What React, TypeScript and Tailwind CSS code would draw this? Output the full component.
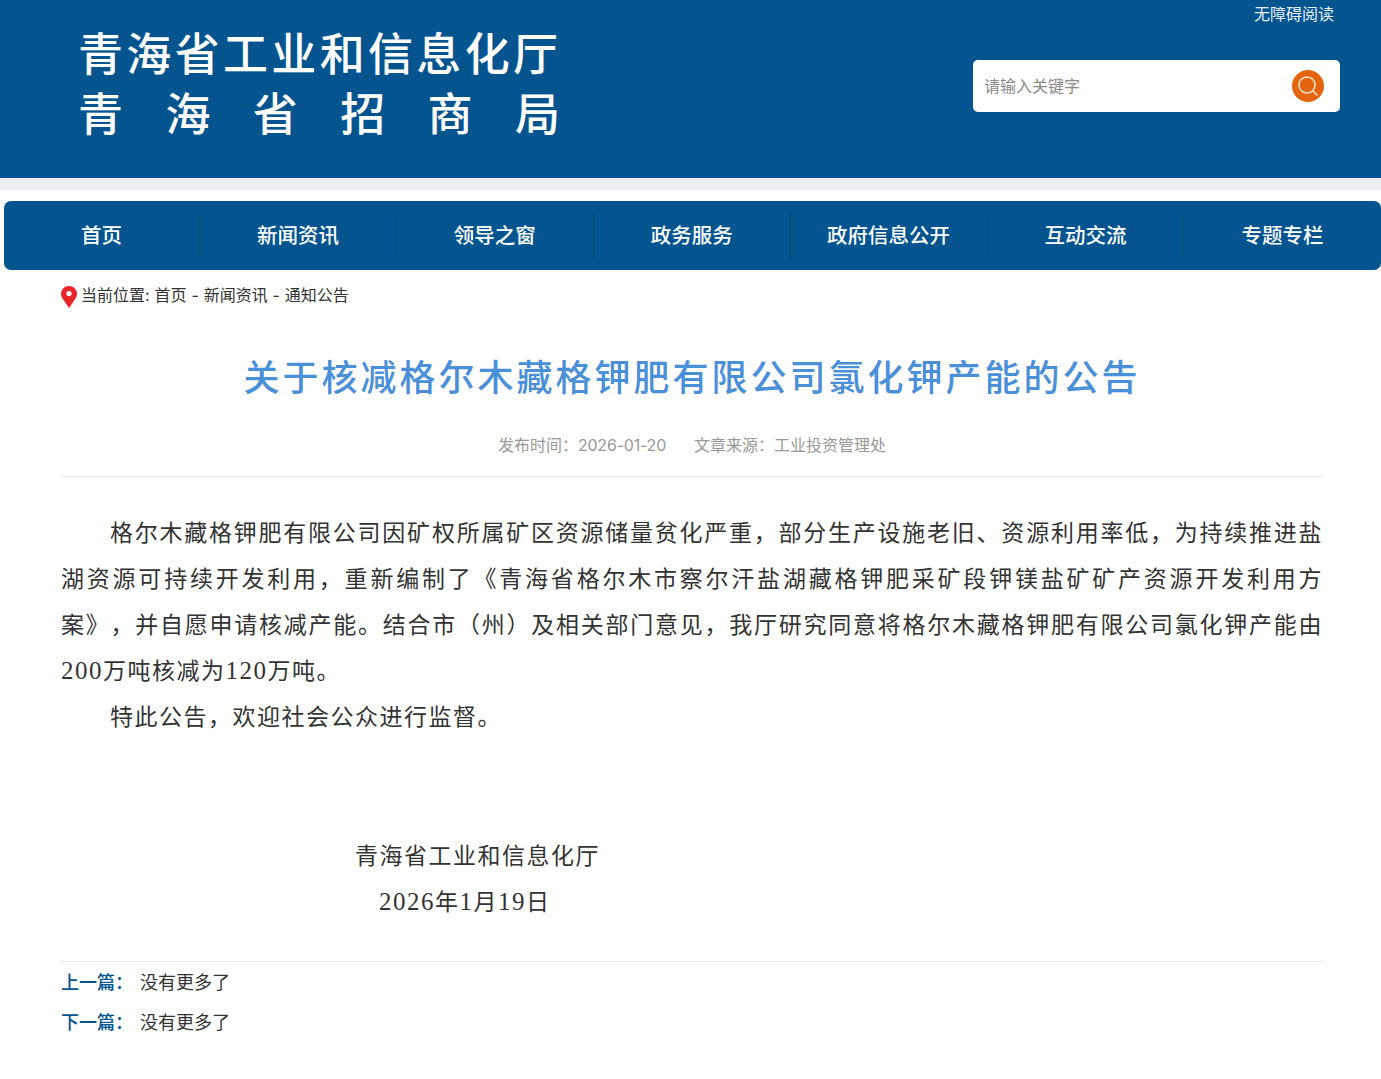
const cjk = "font-['Inter','Noto_Sans_CJK_SC',sans-serif]"

const navItems = ['首页', '新闻资讯', '领导之窗', '政务服务', '政府信息公开', '互动交流', '专题专栏']

function PinIcon() {
  return (
    <svg width="16" height="22" viewBox="0 0 16 22" className="shrink-0 mt-0.5">
      <path d="M8 0C3.600 0 0 3.500 0 7.800c0 2.200.8 3.700 2 5.500L8 22l6-8.700c1.200-1.800 2-3.300 2-5.500C16 3.500 12.400 0 8 0z" fill="#e8262a" />
      <circle cx="8" cy="7.500" r="2.600" fill="#ffffff" />
    </svg>
  )
}

function SearchButton() {
  return (
    <div className="w-8 h-8 rounded-full bg-[#e4650f] flex items-center justify-center">
      <svg width="24" height="24" viewBox="0 0 24 24" fill="none" stroke="#ffe3cf" strokeWidth="1.500" strokeLinecap="round">
        <circle cx="11" cy="11" r="8" />
        <path d="M17 17L21 21" />
      </svg>
    </div>
  )
}

function Digits({ children }: { children: string }) {
  return <span className="tracking-[1.500px] text-[25px] leading-none">{children}</span>
}

export default function App() {
  return (
    <div className={`w-[1381px] h-[1079px] overflow-hidden bg-white ${cjk}`}>
      <header className="h-[178px] bg-[#04558f] flex justify-between">
        <div className="w-[480px] ml-[78px] pt-[28px] text-white text-[45px] leading-[54px] font-medium">
          <div className="flex justify-between">
            {'青海省工业和信息化厅'.split('').map((c, i) => <span key={i}>{c}</span>)}
          </div>
          <div className="flex justify-between mt-1.5 -mr-0.5">
            {'青海省招商局'.split('').map((c, i) => <span key={i}>{c}</span>)}
          </div>
        </div>
        <div className="w-[367px] mr-[41px] flex flex-col items-end">
          <a className="mt-1 mr-1.5 text-[16px] leading-[20px] text-white/90">无障碍阅读</a>
          <div className="mt-9 w-full h-[52px] rounded-[5px] bg-white flex items-center justify-between pl-[11px] pr-4">
            <span className="text-[16px] text-[#8a8a8a]">请输入关键字</span>
            <SearchButton />
          </div>
        </div>
      </header>
      <div className="h-3 bg-[#eceef1]" />

      <nav className="mt-[11px] ml-1 w-[1377px] h-[69px] rounded-[7px] bg-[#04558f] flex items-center">
        {navItems.map((item, i) => (
          <div key={item} className={`h-[50px] pt-0.5 flex items-center justify-center text-white text-[20.500px] font-medium ${i > 0 ? 'w-[196.900px] border-l border-[#0d4a7c]' : 'w-[195px]'}`}>
            {item}
          </div>
        ))}
      </nav>

      <div className="mt-[14px] ml-[61px] flex items-start gap-1 h-[25px] text-[16px] leading-[22px] text-[#333]">
        <PinIcon />
        <span className="[word-spacing:0.400px]">当前位置: 首页 - 新闻资讯 - 通知公告</span>
      </div>

      <main className="ml-[61px] w-[1262px]">
        <h1 className="mt-[41px] text-center text-[36px] leading-[56px] tracking-[3px] font-medium text-[#4a90d9]">
          关于核减格尔木藏格钾肥有限公司氯化钾产能的公告
        </h1>
        <div className="mt-[27px] h-[44px] border-b border-[#e4e4e4] flex justify-center gap-7 text-[16px] leading-[24px] text-[#999]">
          <span>发布时间：<span className="tracking-[-0.200px]">2026-01-20</span></span>
          <span>文章来源：工业投资管理处</span>
        </div>

        <article className="mt-[34px] text-[23px] leading-[46px] tracking-[1.500px] text-[#333] font-['Liberation_Serif','Noto_Sans_CJK_SC',sans-serif] [text-spacing-trim:space-all]">
          <p className="indent-[49px] text-justify">
            格尔木藏格钾肥有限公司因矿权所属矿区资源储量贫化严重，部分生产设施老旧、资源利用率低，为持续推进盐湖资源可持续开发利用，重新编制了《青海省格尔木市察尔汗盐湖藏格钾肥采矿段钾镁盐矿矿产资源开发利用方案》，并自愿申请核减产能。结合市（州）及相关部门意见，我厅研究同意将格尔木藏格钾肥有限公司氯化钾产能由<Digits>200</Digits>万吨核减为<Digits>120</Digits>万吨。
          </p>
          <p className="indent-[49px]">特此公告，欢迎社会公众进行监督。</p>
          <p className="mt-[93px] ml-[294px]">青海省工业和信息化厅</p>
          <p className="ml-[318px]"><Digits>2026</Digits>年<Digits>1</Digits>月<Digits>19</Digits>日</p>
        </article>

        <div className="mt-[35px] border-t border-[#e8e8e8] pt-px text-[18px] leading-[40px]">
          <div className="flex">
            <span className="w-[79px] text-[#04558f] font-medium">上一篇：</span>
            <span className="text-[#333]">没有更多了</span>
          </div>
          <div className="flex">
            <span className="w-[79px] text-[#04558f] font-medium">下一篇：</span>
            <span className="text-[#333]">没有更多了</span>
          </div>
        </div>
      </main>
    </div>
  )
}
